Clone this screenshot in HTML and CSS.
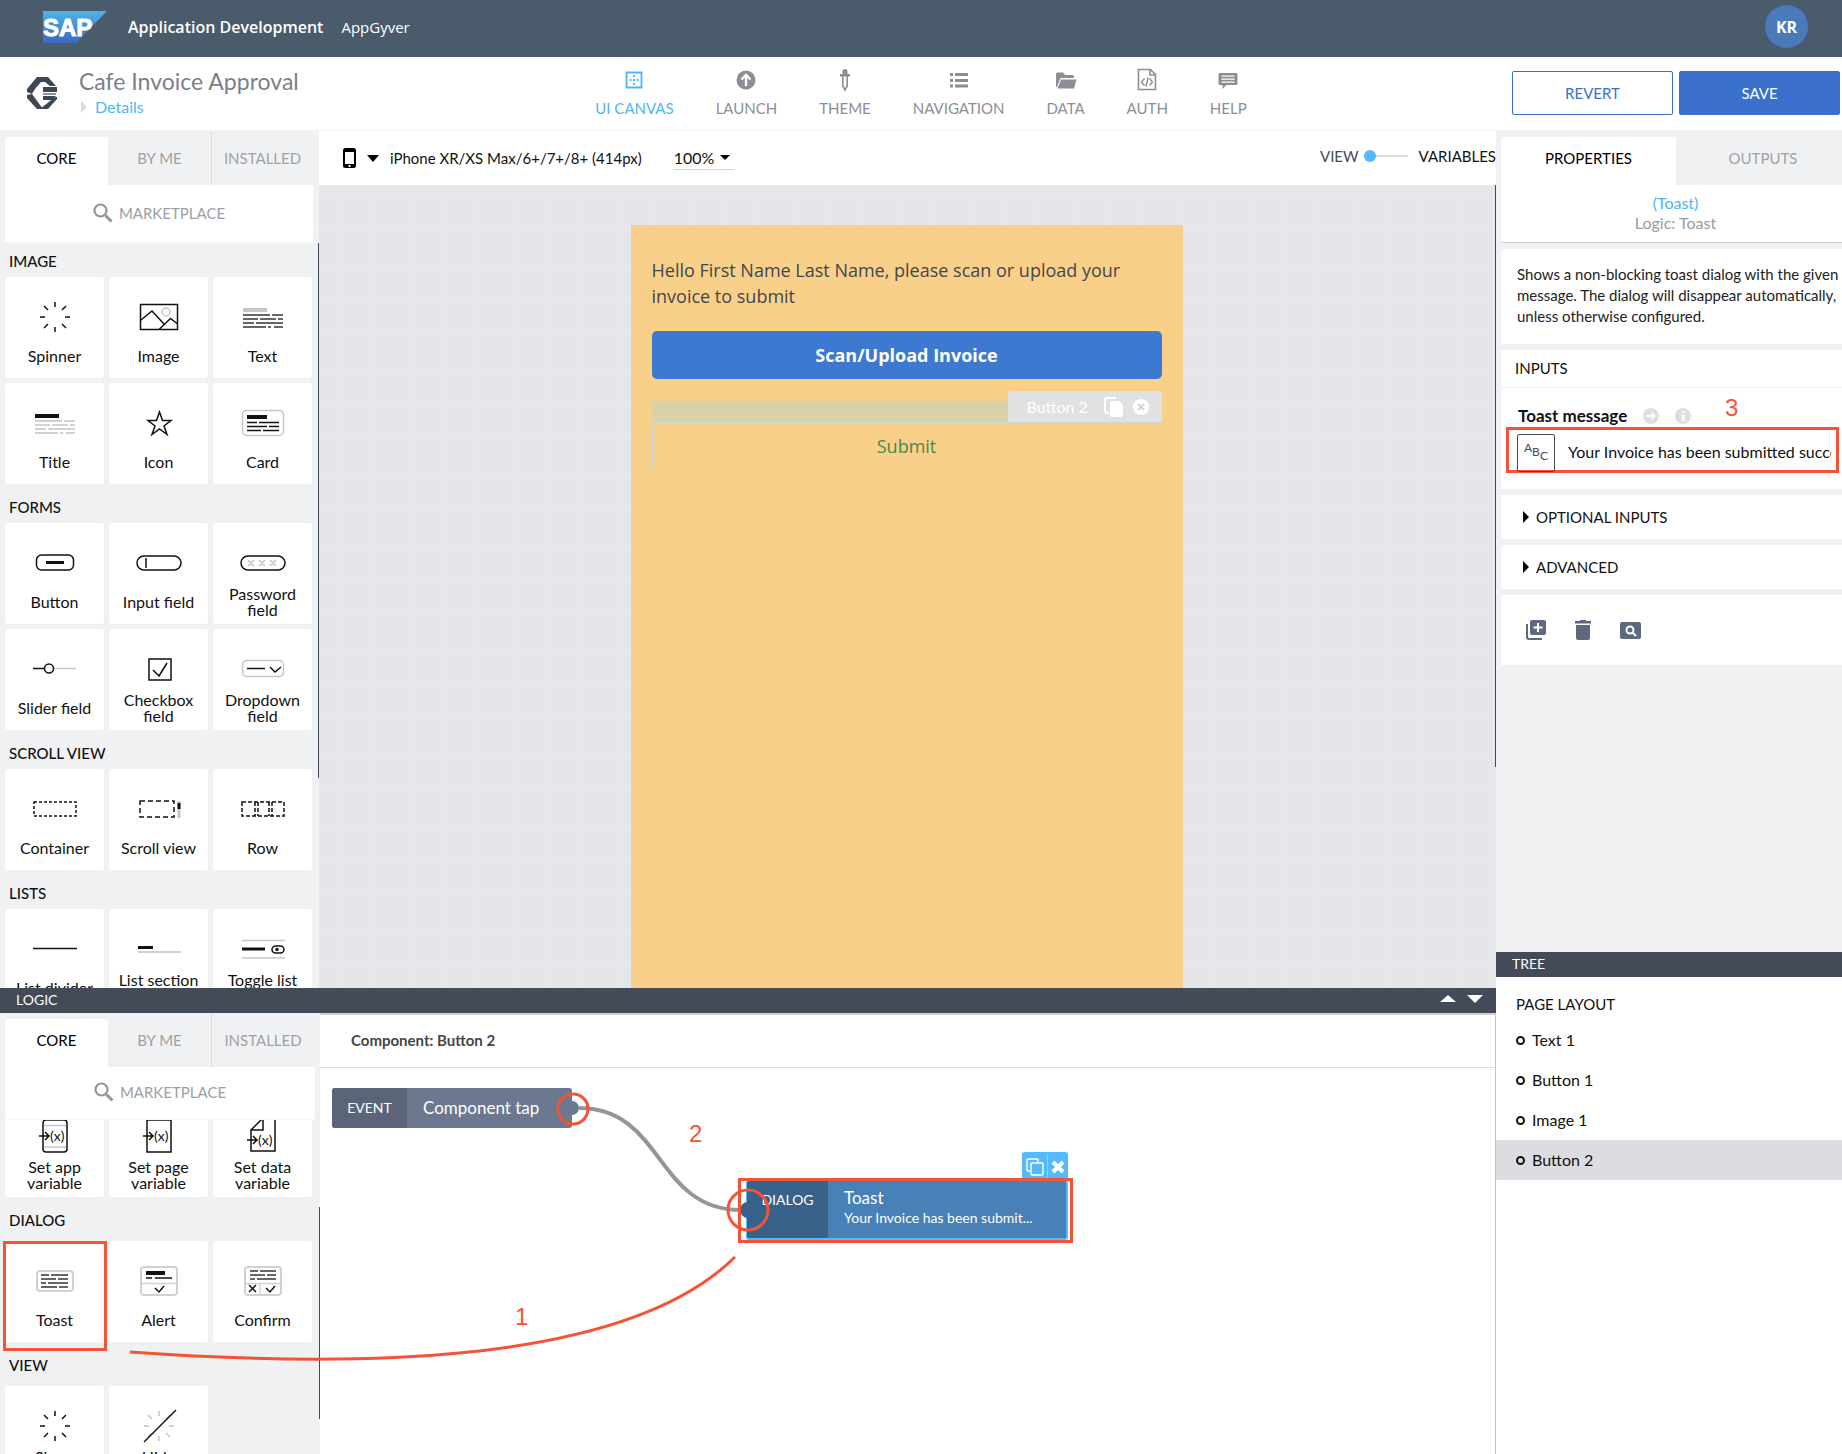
FILE: index.html
```html
<!DOCTYPE html>
<html lang="en">
<head>
<meta charset="utf-8">
<title>Cafe Invoice Approval</title>
<link rel="stylesheet" href="styles.css">
</head>
<body>
<svg class="defs" width="0" height="0" aria-hidden="true">
  <symbol id="i-rays" viewBox="0 0 44 40"><path d="M22 5v5M22 30v5M7 20h5M32 20h5M11 9l4 4M29 27l4 4M33 9l-4 4M15 27l-4 4"/></symbol>
  <symbol id="i-search" viewBox="0 0 20 20"><path d="M12.500 12.500L18.500 18.500" stroke-width="3"/><circle cx="7.500" cy="7.500" r="6" stroke-width="2.200"/></symbol>
</svg>

<header class="shell">
  <svg class="sap" width="64" height="32" viewBox="0 0 64 32" role="img" aria-label="SAP">
    <defs><linearGradient id="sapfill" x1="0" y1="0" x2="0" y2="1"><stop offset="0" stop-color="#4fb4ea"/><stop offset="1" stop-color="#3a68bd"/></linearGradient></defs>
    <path d="M0 0h64L33 32H0z" fill="url(#sapfill)"/>
    <text x="0" y="25" class="sap-text">SAP</text>
  </svg>
  <strong class="product">Application Development</strong>
  <span class="sub-product">AppGyver</span>
  <button class="avatar">KR</button>
</header>

<div class="toolbar">
  <div class="app">
    <svg width="30" height="32" viewBox="0 0 30 32" fill="#3b4859"><path d="M10 0h5L5 17l-5-2v-3z"/><path d="M11 0h10l8 9h-6l-5-4h-4L6 14l-5-2z"/><path d="M16 10h14v5H16z"/><path d="M16 16h13v2H16z" fill="#8a929d"/><path d="M16 19h13l-4 4h-9z"/><path d="M0 18l5-1 11 15h-6L0 21z"/><path d="M28 20h2v2l-9 10h-8z"/></svg>
    <div class="app-name">
      <h1>Cafe Invoice Approval</h1>
      <a href="#"><svg width="6" height="12" viewBox="0 0 6 12"><path d="M0 0l6 6-6 6z" fill="#d9dbe0"/></svg>Details</a>
    </div>
  </div>
  <nav class="nav">
    <a href="#" class="on"><svg width="24" height="24" viewBox="0 0 24 24"><path d="M4.500 4.500h15v15h-15z" fill="none" stroke="currentColor" stroke-width="1.800"/><path d="M11 7h2v2h-2zM11 11h2v2h-2zM11 15h2v2h-2zM7.500 11h2v2h-2zM14.500 11h2v2h-2z" fill="currentColor"/></svg>UI CANVAS</a>
    <a href="#"><svg width="24" height="24" viewBox="0 0 24 24"><circle cx="12" cy="12" r="9.500" fill="currentColor"/><path d="M12 18V8M7.500 11.500L12 7l4.500 4.500" fill="none" stroke="#fff" stroke-width="2.400"/></svg>LAUNCH</a>
    <a href="#"><svg width="24" height="24" viewBox="0 0 24 24"><path d="M9.500 6V3.500a2.500 2.500 0 0 1 5 0V6H17v2.500H7V6z" fill="currentColor"/><path d="M9.800 8v10l2.200 4 2.200-4V8" fill="none" stroke="currentColor" stroke-width="1.600"/></svg>THEME</a>
    <a href="#"><svg width="24" height="24" viewBox="0 0 24 24"><path d="M3 5h3v3H3zM3 11h3v3H3zM3 16.500h3v3H3zM8 5h13v3H8zM8 11h13v3H8zM8 16.500h13v3H8z" fill="currentColor"/></svg>NAVIGATION</a>
    <a href="#"><svg width="24" height="24" viewBox="0 0 24 24"><path d="M2 19V6q0-1.500 1.500-1.500H9L11 7h7.500Q20 7 20 8.500V10H6.500L3 19z" fill="currentColor"/><path d="M7 11.500h15.500L20 20.500H3.500z" fill="currentColor"/></svg>DATA</a>
    <a href="#"><svg width="24" height="24" viewBox="0 0 24 24" fill="none" stroke="currentColor"><path d="M3.500 1.500h12l5 5v15h-17zM15 1.500v5.500h5.500" stroke-width="1.600"/><path d="M9.500 10.500l-3 3.500 3 3.500M14.500 10.500l3 3.500-3 3.500M13 9.500l-2 9" stroke-width="1.400"/></svg>AUTH</a>
    <a href="#"><svg width="24" height="24" viewBox="0 0 24 24"><path d="M4 5h16q1.500 0 1.500 1.500v9q0 1.500-1.500 1.500H10.500L6.500 21v-4H4q-1.500 0-1.500-1.500v-9Q2.500 5 4 5z" fill="currentColor"/><path d="M5.500 8.200h13M5.500 11.200h13M5.500 14.200h13" stroke="#fff" stroke-width="1.200"/></svg>HELP</a>
  </nav>
  <div class="actions">
    <button class="revert">REVERT</button>
    <button class="save">SAVE</button>
  </div>
</div>

<div class="body">
  <div class="work">
    <div class="upper">
      <aside class="palette">
        <div class="tabs"><button class="tab on">CORE</button><button class="tab">BY ME</button><button class="tab last">INSTALLED</button></div>
        <button class="market"><svg class="line" width="20" height="20"><use href="#i-search"/></svg>MARKETPLACE</button>
        <div class="scroll">
          <h2>IMAGE</h2>
          <div class="tiles">
            <button class="tile"><svg class="ic"><use href="#i-rays"/></svg><span>Spinner</span></button>
            <button class="tile"><svg class="ic"><path d="M3.500 7.500h37v25h-37zM4 23l11-9 12 13M22 32.500L33.500 21.500l6.500 5"/><circle class="lt" cx="29" cy="15" r="4"/></svg><span>Image</span></button>
            <button class="tile"><svg class="ic"><path class="lt" stroke-width="4" d="M2 13h24"/><path class="dk" stroke-width="2" d="M2 18h27M31 18h11M2 22h15M19 22h16M37 22h5M2 26h11M15 26h27M2 30h23M27 30h3M33 30h9"/></svg><span>Text</span></button>
            <button class="tile"><svg class="ic"><path stroke-width="4" d="M2 13h24"/><path class="vl" stroke-width="2" d="M2 18h27M31 18h11M2 22h15M19 22h16M37 22h5M2 26h11M15 26h27M2 30h23M27 30h3M33 30h9"/></svg><span>Title</span></button>
            <button class="tile"><svg class="ic"><path d="M22.500 9l3 8.500h8.500l-7 5.500 3 8.500-7.500-5.500-7.500 5.500 3-8.500-7-5.500h8.500z"/></svg><span>Icon</span></button>
            <button class="tile"><svg class="ic"><rect class="lt" x="1.500" y="7.500" width="41" height="25" rx="4"/><path stroke-width="4" d="M6 14h20"/><path d="M6 19.500h10M18 19.500h20M6 23.500h20M28 23.500h10M6 27.500h14M22 27.500h16"/></svg><span>Card</span></button>
          </div>
          <h2>FORMS</h2>
          <div class="tiles">
            <button class="tile"><svg class="ic"><rect x="3.500" y="12" width="37" height="15" rx="5"/><path stroke-width="3" d="M13 19.500h18"/></svg><span>Button</span></button>
            <button class="tile"><svg class="ic"><rect x="0" y="13" width="44" height="14" rx="7"/><path d="M9 15v10"/></svg><span>Input field</span></button>
            <button class="tile"><svg class="ic"><rect x="0" y="13" width="44" height="14" rx="7"/><path class="lt" d="M7 17l6 6M13 17l-6 6M18 17l6 6M24 17l-6 6M29 17l6 6M35 17l-6 6"/></svg><span>Password field</span></button>
            <button class="tile"><svg class="ic"><path class="lt" d="M20 19.500h23"/><path d="M0 19.500h12"/><circle cx="16" cy="19.500" r="4.500"/></svg><span>Slider field</span></button>
            <button class="tile"><svg class="ic"><path d="M12 10h22v21H12zM16 21l6 6 8-13"/></svg><span>Checkbox field</span></button>
            <button class="tile"><svg class="ic"><rect class="lt" x="1.500" y="11.500" width="41" height="16" rx="4"/><path d="M6 19.500h18M29 18l5 5 6-5"/></svg><span>Dropdown field</span></button>
          </div>
          <h2>SCROLL VIEW</h2>
          <div class="tiles">
            <button class="tile"><svg class="ic"><path stroke-dasharray="3 2" d="M1 13h42v14H1z"/></svg><span>Container</span></button>
            <button class="tile"><svg class="ic"><path stroke-dasharray="5 3" d="M3 12h34v16H3z"/><path class="lt" stroke-width="3" d="M42 12v17"/><path stroke-width="3" d="M42 14v6"/></svg><span>Scroll view</span></button>
            <button class="tile"><svg class="ic"><path stroke-dasharray="4 2" d="M1 13h42v14H1zM14 13v14M17 13v14M28 13v14M31 13v14"/></svg><span>Row</span></button>
          </div>
          <h2>LISTS</h2>
          <div class="tiles">
            <button class="tile"><svg class="ic"><path d="M0 19.500h44"/></svg><span>List divider</span></button>
            <button class="tile"><svg class="ic"><path stroke-width="3" d="M1 18.500h15"/><path class="lt" d="M1 23h43"/></svg><span>List section header</span></button>
            <button class="tile"><svg class="ic"><path class="lt" d="M1 11.500h43M1 29h43"/><path stroke-width="3" d="M1 20h23"/><rect x="31" y="17" width="12" height="7" rx="3.500"/><circle cx="36" cy="20.500" r="1"/></svg><span>Toggle list item</span></button>
          </div>
        </div>
      </aside>
      <main class="stage">
        <div class="stage-bar">
          <button class="device"><svg width="13" height="20" viewBox="0 0 13 20"><rect width="13" height="20" rx="2.500"/><path d="M2 4h9v12H2z" fill="#fff"/><path d="M5.500 17h2v2h-2z" fill="#fff"/></svg><i class="down"></i>iPhone XR/XS Max/6+/7+/8+ (414px)</button>
          <button class="zoom">100%<i class="down small"></i></button>
          <label class="mode"><span class="view">VIEW</span><input type="range" min="0" max="1" value="0"><span>VARIABLES</span></label>
        </div>
        <div class="grid">
          <div class="phone">
            <p>Hello First Name Last Name, please scan or upload your invoice to submit</p>
            <button class="scan">Scan/Upload Invoice</button>
            <div class="picked">
              <div class="handle"><span>Button 2</span>
                <svg width="19" height="20" viewBox="0 0 19 20"><path d="M1 15V3q0-2 2-2h9" fill="none" stroke="#fff" stroke-width="2"/><path d="M1 13q0 3 4 3" fill="none" stroke="#fff" stroke-width="2"/><path d="M8 4h7l4 4v10q0 2-2 2H8q-2 0-2-2V6q0-2 2-2z" fill="#fff"/></svg>
                <svg width="16" height="16" viewBox="0 0 16 16"><circle cx="8" cy="8" r="8" fill="#fff"/><path d="M5 5l6 6M11 5l-6 6" stroke="#d4d4d4" stroke-width="2"/></svg>
              </div>
              <button class="submit">Submit</button>
            </div>
          </div>
        </div>
      </main>
    </div>

    <section class="logic">
      <div class="strip"><span>LOGIC</span><div class="strip-tools"><i class="up"></i><i class="down light"></i></div></div>
      <div class="logic-body">
        <aside class="palette">
          <div class="tabs"><button class="tab on">CORE</button><button class="tab">BY ME</button><button class="tab last">INSTALLED</button></div>
          <button class="market"><svg class="line" width="20" height="20"><use href="#i-search"/></svg>MARKETPLACE</button>
          <div class="scroll">
            <div class="tiles scrolled">
              <button class="tile"><svg class="ic"><rect x="10" y="4" width="24" height="32" rx="3"/><path class="lt" d="M11 9.500h22M11 31h22"/><path d="M6 20h9M12 16l4 4-4 4"/><text x="17" y="25">(x)</text></svg><span>Set app variable</span></button>
              <button class="tile"><svg class="ic"><path d="M10 4h24v32H10zM6 20h9M12 16l4 4-4 4"/><text x="17" y="25">(x)</text></svg><span>Set page variable</span></button>
              <button class="tile"><svg class="ic"><path d="M10 14L22 2v12H10v21h24V0M6 24h9M12 20l4 4-4 4"/><text x="17" y="29">(x)</text></svg><span>Set data variable</span></button>
            </div>
            <h2>DIALOG</h2>
            <div class="tiles">
              <button class="tile marked"><svg class="ic"><rect class="vl" stroke-width="2" x="4" y="10" width="36" height="20" rx="3"/><path class="dk" stroke-width="2" d="M8 14h8M18 14h17M8 18h15M25 18h10M8 22h5M15 22h20M8 26h16M26 26h9"/></svg><span>Toast</span></button>
              <button class="tile"><svg class="ic"><rect class="vl" stroke-width="2" x="4" y="6" width="36" height="28" rx="3"/><path class="vl" d="M4 22.500h36"/><path stroke-width="4" d="M9 12h19"/><path d="M9 17h6M18 17h17M18 27l4 4 5-6"/></svg><span>Alert</span></button>
              <button class="tile"><svg class="ic"><rect class="vl" stroke-width="2" x="4" y="6" width="36" height="28" rx="3"/><path class="vl" d="M4 22.500h36M19 22v12"/><path class="dk" stroke-width="2" d="M9 10h8M19 10h16M9 14h15M26 14h9M9 18h5M16 18h19"/><path d="M8 24l7 7M15 24l-7 7M25 27l4 4 5-6"/></svg><span>Confirm</span></button>
            </div>
            <h2>VIEW</h2>
            <div class="tiles">
              <button class="tile"><svg class="ic"><use href="#i-rays"/></svg><span>Show spinner</span></button>
              <button class="tile"><svg class="ic"><use class="lt" href="#i-rays"/><path d="M7 36L39 4"/></svg><span>Hide spinner</span></button>
            </div>
          </div>
        </aside>
        <div class="flow">
          <h2>Component: Button 2</h2>
          <div class="flow-canvas">
            <div class="node event"><b>EVENT</b><span>Component tap</span></div>
            <div class="node toast"><b>DIALOG</b><div><span>Toast</span><small>Your Invoice has been submit...</small></div></div>
            <div class="node-tools">
              <button aria-label="Copy"><svg width="18" height="18" viewBox="0 0 18 18" fill="none" stroke="#fff" stroke-width="1.400"><path d="M4 13H2q-1 0-1-1V2q0-1 1-1h9q1 0 1 1v2"/><rect x="5" y="5" width="12" height="12" rx="1"/></svg></button>
              <button aria-label="Delete"><svg width="14" height="14" viewBox="0 0 14 14"><path d="M2 2l10 10M12 2L2 12" stroke="#fff" stroke-width="4"/></svg></button>
            </div>
          </div>
        </div>
      </div>
      <svg class="notes" width="1100" height="466" viewBox="0 988 1100 466" fill="none">
        <circle cx="572" cy="1108" r="7" fill="#6c7890"/>
        <circle cx="748" cy="1210" r="8" fill="#38628a"/>
        <path d="M579 1108C664 1108 655 1210 741 1210" stroke="#959595" stroke-width="4"/>
        <g stroke="#f45336" stroke-width="3">
          <circle cx="573" cy="1109" r="15"/>
          <circle cx="748" cy="1210" r="20"/>
          <path d="M739.500 1179.500h332v62h-332z"/>
          <path d="M130 1352C330 1366 620 1371 735 1257"/>
        </g>
        <text x="515" y="1325">1</text>
        <text x="689" y="1142">2</text>
      </svg>
    </section>
  </div>

  <aside class="side">
    <div class="props">
      <div class="tabs"><button class="tab on">PROPERTIES</button><button class="tab">OUTPUTS</button></div>
      <div class="box who"><a href="#">(Toast)</a><span>Logic: Toast</span></div>
      <p class="box about">Shows a non-blocking toast dialog with the given message. The dialog will disappear automatically, unless otherwise configured.</p>
      <div class="box inputs">
        <h3>INPUTS</h3>
        <div class="field">
          <div class="field-head"><label for="msg">Toast message</label>
            <svg width="16" height="16" viewBox="0 0 16 16"><circle cx="8" cy="8" r="8" fill="#dddee2"/><path d="M3.500 8H11M8.500 5l3 3-3 3" stroke="#fff" stroke-width="2" fill="none"/></svg>
            <svg width="16" height="16" viewBox="0 0 16 16"><circle cx="8" cy="8" r="8" fill="#dddee2"/><path d="M7 3h2.500v2H7zM6.500 7h3v5h1v1h-4.500v-1h1V8h-1z" fill="#fff"/></svg>
            <span class="num">3</span>
          </div>
          <div class="field-row"><button class="abc" aria-label="Text binding"><svg width="28" height="28" viewBox="0 0 28 28"><text x="2" y="13">A</text><text x="10" y="17">B</text><text x="18" y="21">C</text></svg></button><input id="msg" type="text" value="Your Invoice has been submitted successfully"></div>
        </div>
      </div>
      <button class="box fold"><i class="right"></i>OPTIONAL INPUTS</button>
      <button class="box fold"><i class="right"></i>ADVANCED</button>
      <div class="box tools">
        <button aria-label="Duplicate"><svg width="20" height="20" viewBox="0 0 20 20" fill="#5e687e"><path d="M6 0h12q2 0 2 2v11q0 2-2 2H6q-2 0-2-2V2q0-2 2-2z"/><path d="M1 4v13q0 2 2 2h13" fill="none" stroke="#5e687e" stroke-width="2"/><path d="M12 3v9M7.500 7.500h9" stroke="#fff" stroke-width="2"/></svg></button>
        <button aria-label="Delete"><svg width="16" height="20" viewBox="0 0 16 20" fill="#5e687e"><path d="M5 0h6v1h5v2.500H0V1h5zM1 5h14v13q0 2-2 2H3q-2 0-2-2z"/></svg></button>
        <button aria-label="Inspect"><svg width="21" height="17" viewBox="0 0 21 17" fill="#5e687e"><rect width="21" height="17" rx="2"/><circle cx="10" cy="8" r="3.500" fill="none" stroke="#fff" stroke-width="2"/><path d="M12.500 10.500L16 14" stroke="#fff" stroke-width="2.200"/></svg></button>
      </div>
    </div>
    <section class="tree">
      <div class="strip">TREE</div>
      <h2>PAGE LAYOUT</h2>
      <ul><li>Text 1</li><li>Button 1</li><li>Image 1</li><li class="on">Button 2</li></ul>
    </section>
  </aside>
</div>
</body>
</html>
```
FILE: styles.css
```css
*, *::before, *::after { box-sizing: border-box; }
body {
  margin: 0;
  height: 100vh;
  display: flex;
  flex-direction: column;
  overflow: hidden;
  background: #fff;
  color: #111;
  font: 15px/20px Lato, "Open Sans", sans-serif;
}
h1, h2, h3, p, ul { margin: 0; padding: 0; font-weight: 400; }
button { font: inherit; color: inherit; background: none; border: 0; padding: 0; margin: 0; }
a { text-decoration: none; color: #4db6f5; }
svg { display: block; flex: none; }
.defs { position: absolute; }

/* shell header */
.shell { flex: none; height: 57px; background: #4a5b6c; color: #fff; display: flex; align-items: center; padding: 0 34px 4px 43px; font-family: "Open Sans", sans-serif; }
.sap-text { font: bold 24px "Liberation Sans", sans-serif; fill: #fff; stroke: #fff; stroke-width: 1px; }
.product { margin-left: 21px; font-size: 16px; font-weight: 600; }
.sub-product { margin-left: 18px; font-size: 15px; }
.avatar { margin-left: auto; width: 43px; height: 43px; border-radius: 50%; background: #4a7aba; font-weight: 700; font-size: 16px; }

/* toolbar */
.toolbar { flex: none; height: 74px; padding-bottom: 2px; border-bottom: 1px solid #f3f4f6; display: grid; grid-template-columns: 1fr auto 1fr; align-items: center; }
.app { display: flex; align-items: center; gap: 22px; padding-left: 27px; }
.app h1 { font-size: 23px; line-height: 28px; color: #7b7f8a; }
.app a { display: flex; align-items: center; gap: 8px; padding-left: 2px; font-size: 16px; line-height: 24px; }
.nav { display: flex; gap: 42px; }
.nav a { display: flex; flex-direction: column; align-items: center; gap: 6px; font-size: 15px; line-height: 20px; color: #8c8e96; }
.nav a.on { color: #4db6f5; }
.actions { display: flex; justify-content: flex-end; gap: 6px; padding-right: 2px; }
.actions button { width: 161px; height: 44px; border-radius: 2px; border: 1px solid #3a70cc; color: #3a70cc; }
.actions .save { background: #3a70cc; color: #fff; }

/* frame */
.body { flex: 1; min-height: 0; display: grid; grid-template-columns: 1fr 346px; }
.work { min-width: 0; min-height: 0; display: flex; flex-direction: column; }
.upper { flex: 1; min-height: 0; display: flex; }

/* component palettes */
.palette { position: relative; flex: none; width: 319px; background: #f0f1f3; display: flex; flex-direction: column; padding-left: 5px; min-height: 0; }
.tabs { flex: none; height: 54px; display: flex; }
.tab { width: 103px; color: #a0a1a6; }
.tab.on { margin-top: 6px; padding-bottom: 6px; background: #fff; color: #000; border-radius: 4px 4px 0 0; }
.tab.last { flex: 1; padding-right: 6px; border-left: 1px solid #dcdde1; }
.market { flex: none; height: 58px; margin-right: 6px; padding-bottom: 2px; background: #fff; border-bottom: 1px solid #f6f6f7; display: flex; align-items: center; justify-content: center; gap: 6px; color: #9d9ea3; }
.line { fill: none; stroke: #94959a; }
.scroll { flex: 1; min-height: 0; overflow: hidden; }
.scroll h2 { height: 34px; padding: 8px 4px 0; font-size: 15px; font-weight: 500; }
.tiles { display: grid; grid-template-columns: repeat(3, 99px); gap: 5px; margin-bottom: 5px; }
.tile { position: relative; height: 101px; background: #fff; border-radius: 3px; display: flex; flex-direction: column; align-items: center; padding-top: 20px; font-size: 16px; line-height: 16px; }
.tile span { height: 38px; width: 84px; display: flex; align-items: center; justify-content: center; text-align: center; }
.ic { width: 44px; height: 40px; fill: none; stroke: #111; stroke-width: 1.500px; overflow: visible; }
.ic text { font: 14px Lato, sans-serif; fill: #111; stroke: none; }
.lt { stroke: #c4c5ca; }
.vl { stroke: #d0d1d6; }
.dk { stroke: #666; }
.palette::after { content: ""; position: absolute; right: 0; top: 112px; height: 535px; width: 1px; background: #3f4a5c; }

/* canvas */
.stage { flex: 1; min-width: 0; display: flex; flex-direction: column; }
.stage-bar { flex: none; height: 54px; display: flex; align-items: center; padding-left: 24px; font-size: 15px; }
.device { display: flex; align-items: center; gap: 11px; }
.down { border: 6px solid transparent; border-top: 7px solid #000; border-bottom: 0; }
.up { border: 8px solid transparent; border-bottom: 7px solid #fff; border-top: 0; }
.down.small { border-width: 5px; border-bottom: 0; }
.down.light { border-width: 8px; border-bottom: 0; border-top-color: #fff; }
.zoom { display: flex; align-items: center; gap: 6px; margin-left: 32px; border-bottom: 1px solid #d5d6da; font-size: 16px; padding: 1px 5px 1px 0; }
.mode { margin-left: auto; display: flex; align-items: center; font-size: 15px; padding-bottom: 4px; }
.mode .view { color: #444b59; }
.mode input { appearance: none; width: 44px; height: 12px; margin: 0 11px 0 5px; background: linear-gradient(#dcdde2, #dcdde2) center / 100% 2px no-repeat; }
.mode input::-webkit-slider-thumb { appearance: none; width: 12px; height: 12px; border-radius: 50%; background: #56b9fb; }
.grid {
  flex: 1; min-height: 0; display: flex; justify-content: center; padding: 40px 2px 0 0; position: relative;
  background:
    repeating-linear-gradient(#0000 0 9px, #ffffff2c 9px 10px, #0000 10px 35px),
    repeating-linear-gradient(90deg, #0000 0 19px, #ffffff20 19px 20px, #0000 20px 35px),
    #e4e6ea;
}
.grid::after { content: ""; position: absolute; right: 0; top: 0; height: 582px; width: 1px; background: #3f4a5c; }
.phone { width: 552px; background: #f9d08a; padding: 32px 21px; font: 18px/26px "Open Sans", sans-serif; color: #43474d; display: flex; flex-direction: column; gap: 22px; }
.scan { height: 48px; border-radius: 5px; background: #3d79d0; color: #fff; font-weight: 700; }
.picked { position: relative; padding-top: 21px; background: linear-gradient(#d9d1a9, #d9d1a9) top / 100% 21px no-repeat; }
.submit { width: 100%; height: 48px; border: 1px solid #ccd8d8; border-radius: 3px; color: #448a52; }
.handle { position: absolute; right: 0; top: -10px; width: 154px; height: 31px; background: #e1e1e1; border-radius: 4px 4px 0 0; color: #fff; font: 16px/20px Lato, sans-serif; display: flex; align-items: center; gap: 10px; padding-left: 19px; }
.handle span { margin-right: 6px; }

/* logic dock */
.strip { flex: none; height: 25px; background: #444b58; color: #fff; padding-left: 16px; font-size: 14px; line-height: 24px; display: flex; justify-content: space-between; }
.strip-tools { display: flex; gap: 11px; align-items: center; padding: 0 13px 4px 0; }
.logic { position: relative; flex: none; height: 466px; display: flex; flex-direction: column; }
.logic-body { flex: 1; min-height: 0; display: flex; }
.logic .palette { width: 320px; }
.logic .palette::after { top: 194px; height: 212px; }
.logic .market { height: 53px; margin-right: 5px; }
.logic .scroll h2 { height: 39px; padding-top: 8px; }
.scrolled { margin-top: -24px; }
.marked::after { content: ""; position: absolute; inset: 0 -3px -9px -2px; border: 3px solid #f45336; z-index: 1; }
.scroll:has(.marked) { margin-left: -5px; padding-left: 5px; }
.flow { flex: 1; display: flex; flex-direction: column; border-top: 2px solid #cfd1d8; border-right: 1px solid #c3c5ca; }
.flow h2 { height: 53px; line-height: 50px; padding-left: 31px; border-bottom: 1px solid #dcdde0; font-size: 15px; font-weight: 700; color: #43464d; }
.flow-canvas { flex: 1; position: relative; color: #fff; }
.node { position: absolute; display: flex; border-radius: 3px; }
.node b { font-weight: 400; font-size: 14px; text-align: center; border-radius: 3px 0 0 3px; }
.node span { font-size: 17px; }
.event { left: 12px; top: 20px; width: 240px; height: 40px; line-height: 40px; background: #6c7890; }
.event b { width: 75px; background: #5b6478; }
.event span { padding-left: 16px; }
.toast { left: 426px; top: 112px; width: 322px; height: 60px; background: #4880b8; border: 1px solid #56b9fb; border-right-width: 2px; border-bottom-width: 2px; }
.toast b { width: 81px; background: #38628a; padding-top: 9px; }
.toast div { padding: 7px 0 0 16px; display: flex; flex-direction: column; }
.toast small { font-size: 14px; line-height: 20px; }
.node-tools { position: absolute; left: 702px; top: 84px; width: 46px; height: 28px; padding-top: 2px; display: flex; background: #56b9fb; border-radius: 3px 3px 0 0; }
.node-tools button { width: 25px; display: flex; align-items: center; justify-content: center; }
.node-tools button + button { width: 21px; border-left: 1px solid #8ccffc; }
.notes { position: absolute; left: 0; top: 0; pointer-events: none; }
.notes text, .num { font: 24px "Liberation Sans", sans-serif; }
.notes text { fill: #f45336; }

/* properties */
.side { background: #f0f1f3; display: flex; flex-direction: column; min-height: 0; }
.props { flex: 1; min-height: 0; padding-left: 5px; display: flex; flex-direction: column; }
.side .tab { flex: 1; padding-left: 8px; }
.side .tab.on { flex: none; width: 175px; padding-left: 0; }
.box { flex: none; background: #fff; margin-bottom: 6px; }
.who { height: 58px; border-bottom: 1px solid #cdd0d6; display: flex; flex-direction: column; align-items: center; padding: 8px 0 0 8px; font-size: 16px; color: #999ba1; }
.about { height: 95px; padding: 15px 0 0 16px; font-size: 15px; line-height: 21px; color: #222; }
.inputs { height: 139px; }
.inputs h3 { height: 38px; line-height: 36px; padding-left: 14px; border-bottom: 1px solid #f2f2f4; font-size: 15px; }
.field { padding: 16px 3px 0 5px; }
.field-head { display: flex; align-items: center; gap: 16px; height: 23px; padding-left: 12px; position: relative; }
.field-head label { font-size: 17px; font-weight: 700; }
.num { position: absolute; left: 219px; top: -10px; color: #f45336; }
.field-row { display: flex; align-items: center; height: 46px; border: 3px solid #f45336; padding: 6px 5px 0 8px; }
.abc { flex: none; width: 38px; height: 38px; border: 1px solid #444b59; border-radius: 2px; display: flex; align-items: center; justify-content: center; }
.abc text { font: 12px Lato, sans-serif; fill: #444b59; }
.field-row input { flex: 1; min-width: 0; border: 0; padding: 0; margin: 0 0 2px 13px; font: 16px/20px Lato, sans-serif; color: #111; background: none; }
.fold { height: 44px; display: flex; align-items: center; gap: 7px; padding-left: 22px; }
.right { border: 6px solid transparent; border-left-color: #000; border-right: 0; }
.tools { height: 70px; display: flex; align-items: center; gap: 29px; padding-left: 25px; }

/* tree */
.tree { flex: none; height: 502px; background: #fff; }
.tree h2 { height: 43px; padding: 17px 20px 0; font-size: 15px; }
.tree ul { list-style: none; font-size: 16px; line-height: 40px; }
.tree li { display: flex; align-items: center; gap: 7px; padding-left: 20px; }
.tree li::before { content: ""; width: 9px; height: 9px; border: 2px solid #111; border-radius: 50%; }
.tree li.on { background: #dcdde0; }
```
